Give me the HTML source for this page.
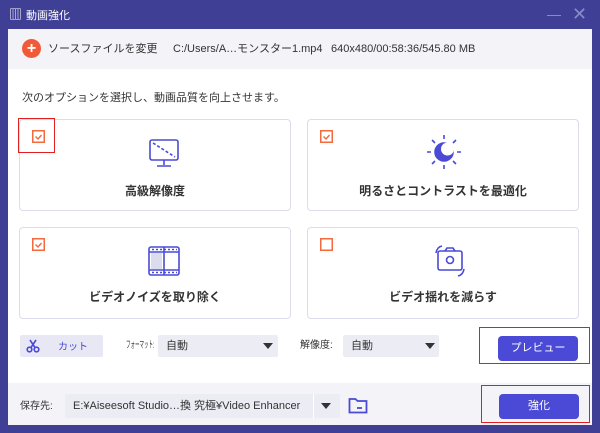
<!DOCTYPE html><html><head><meta charset="utf-8"><style>
*{margin:0;padding:0;box-sizing:border-box}
body{width:600px;height:433px;background:#3f3f96;position:relative;overflow:hidden;font-family:"Liberation Sans","Noto Sans CJK JP",sans-serif;font-size:11px;color:#333}
.a{position:absolute;white-space:nowrap;line-height:14px}
.card{position:absolute;background:#fff;border:1px solid #dcdcef;border-radius:4px}
.cb{position:absolute;left:12px;top:10px;width:13px;height:13px}
.lbl{position:absolute;left:0;right:0;text-align:center;font-size:12px;font-weight:bold;color:#333;line-height:14px}
.sel{position:absolute;background:#ececf4;border-radius:2px;height:22px;line-height:22px;padding-left:8px;font-size:11px;white-space:nowrap}
.tri{position:absolute;width:0;height:0;border-left:5px solid transparent;border-right:5px solid transparent;border-top:6px solid #333}
.btn{position:absolute;background:#4a4ad6;color:#fff;border-radius:4px;text-align:center;font-size:11px}
.red{position:absolute;border:1.5px solid #e02020}
</style></head><body>
<div class="a" style="left:9px;top:8px;color:#fff;font-size:13px">▥</div>
<div class="a" style="left:26px;top:9px;color:#fff;font-size:11px">動画強化</div>
<div class="a" style="left:547px;top:15px;width:14px;height:1px;background:#8a8ac8"></div>
<div class="a" style="left:572px;top:5px;color:#8a8ac8;font-size:18px;line-height:18px">✕</div>
<div class="a" style="left:8px;top:29px;width:584px;height:396px;background:#fff"></div>
<div class="a" style="left:8px;top:29px;width:584px;height:40px;background:#f3f3f8"></div>
<div class="a" style="left:22px;top:39px;width:19px;height:19px;border-radius:50%;background:#f15a38;color:#fff;text-align:center;line-height:19px;font-size:16px;font-weight:bold">+</div>
<div class="a" style="left:48px;top:42px">ソースファイルを変更</div>
<div class="a" style="left:173px;top:42px">C:/Users/A…モンスター1.mp4</div>
<div class="a" style="left:331px;top:42px">640x480/00:58:36/545.80 MB</div>
<div class="a" style="left:22px;top:91px">次のオプションを選択し、動画品質を向上させます。</div>

<svg width="0" height="0" style="position:absolute"><defs><symbol id="chk" viewBox="0 0 13 13"><rect x="0.75" y="0.75" width="11.5" height="11.5" fill="none" stroke="#f26a3d" stroke-width="1.5"/><path d="M3.5 6.5l2.5 2.5 3.5-4" fill="none" stroke="#f26a3d" stroke-width="1.4"/></symbol><symbol id="unc" viewBox="0 0 13 13"><rect x="0.75" y="0.75" width="11.5" height="11.5" fill="none" stroke="#f26a3d" stroke-width="1.5"/></symbol></defs></svg>

<div class="card" style="left:19px;top:119px;width:272px;height:92px"><svg class="cb"><use href="#chk"/></svg>
<svg class="a" style="left:128px;top:18px" width="32" height="32" viewBox="0 0 32 32" fill="none" stroke="#4a4ad6" stroke-width="1.6"><rect x="2" y="2" width="28" height="20" rx="2"/><path d="M5 5 L27 19" stroke-dasharray="3 2"/><path d="M16 22v5M9 28h14"/></svg>
<div class="lbl" style="top:64px">高級解像度</div></div>
<div class="card" style="left:307px;top:119px;width:272px;height:92px"><svg class="cb"><use href="#chk"/></svg>
<svg class="a" style="left:116px;top:12px" width="40" height="40" viewBox="0 0 40 40" fill="none" stroke="#4a4ad6" stroke-width="1.6"><circle cx="20" cy="20" r="9" fill="#4a4ad6"/><circle cx="23.5" cy="17" r="6.5" fill="#fff" stroke="none"/><path d="M20 3v4M20 33v4M3 20h4M33 20h4M8 8l3 3M29 29l3 3M8 32l3-3M29 11l3-3"/></svg>
<div class="lbl" style="top:64px">明るさとコントラストを最適化</div></div>
<div class="card" style="left:19px;top:227px;width:272px;height:92px"><svg class="cb"><use href="#chk"/></svg>
<svg class="a" style="left:127px;top:17px" width="34" height="32" viewBox="0 0 34 32" fill="none" stroke="#4a4ad6" stroke-width="1.6"><rect x="2" y="2" width="30" height="28" rx="2"/><path d="M2 7h30M2 25h30M17 2v28" /><rect x="4" y="8" width="11" height="16" fill="#dcdcef" stroke="none"/><path d="M5 4.5h25M5 27.5h25" stroke-dasharray="2 2"/></svg>
<div class="lbl" style="top:62px">ビデオノイズを取り除く</div></div>
<div class="card" style="left:307px;top:227px;width:272px;height:92px"><svg class="cb"><use href="#unc"/></svg>
<svg class="a" style="left:125px;top:15px" width="34" height="36" viewBox="0 0 34 36" fill="none" stroke="#4a4ad6" stroke-width="1.6"><rect x="5" y="8" width="24" height="19" rx="2"/><path d="M12 8l2-3h6l2 3"/><circle cx="17" cy="17" r="3.5"/><path d="M3 10 Q4 4 9 3M31 26 Q30 32 25 33"/></svg>
<div class="lbl" style="top:62px">ビデオ揺れを減らす</div></div>
<div class="red" style="left:18px;top:118px;width:37px;height:35px"></div>

<div class="sel" style="left:20px;top:335px;width:83px;background:#e8e8f4;padding:0"><svg style="position:absolute;left:6px;top:4px" width="14" height="14" viewBox="0 0 14 14" fill="none" stroke="#4a4ad6" stroke-width="1.6"><circle cx="3.5" cy="10.5" r="2.3"/><circle cx="10.5" cy="10.5" r="2.3"/><path d="M5 8.5L10 1M9 8.5L4 1"/></svg><span style="position:absolute;left:38px;top:2px;line-height:22px;color:#4a4ad6;font-size:10px">カット</span></div>
<div class="sel" style="left:158px;top:335px;width:120px">自動</div><div class="tri" style="left:263px;top:343px"></div>
<div class="a" style="left:126px;top:339px;font-size:10px;transform:scaleX(0.45);transform-origin:left">フォーマット:</div>
<div class="a" style="left:300px;top:339px;font-size:10px">解像度:</div>
<div class="sel" style="left:343px;top:335px;width:96px">自動</div><div class="tri" style="left:425px;top:343px"></div>
<div class="btn" style="left:498px;top:336px;width:80px;height:25px;line-height:25px">プレビュー</div>
<div class="red" style="left:479px;top:327px;width:111px;height:37px"></div>

<div class="a" style="left:8px;top:383px;width:584px;height:42px;background:#f3f3f8"></div>
<div class="a" style="left:20px;top:400px;font-size:10px">保存先:</div>
<div class="sel" style="left:65px;top:394px;width:275px;height:24px;line-height:24px">E:¥Aiseesoft Studio…換 究極¥Video Enhancer</div>
<div class="a" style="left:313px;top:394px;width:1px;height:24px;background:#fff"></div>
<div class="tri" style="left:321px;top:403px"></div>
<svg class="a" style="left:348px;top:397px" width="20" height="17" viewBox="0 0 20 17" fill="none" stroke="#4a4ad6" stroke-width="1.8"><path d="M1.5 2h6l2 2h9v11.5h-17z"/><path d="M9 11h5"/></svg>
<div class="btn" style="left:499px;top:394px;width:80px;height:25px;line-height:25px">強化</div>
<div class="red" style="left:481px;top:385px;width:109px;height:38px"></div>
</body></html>
